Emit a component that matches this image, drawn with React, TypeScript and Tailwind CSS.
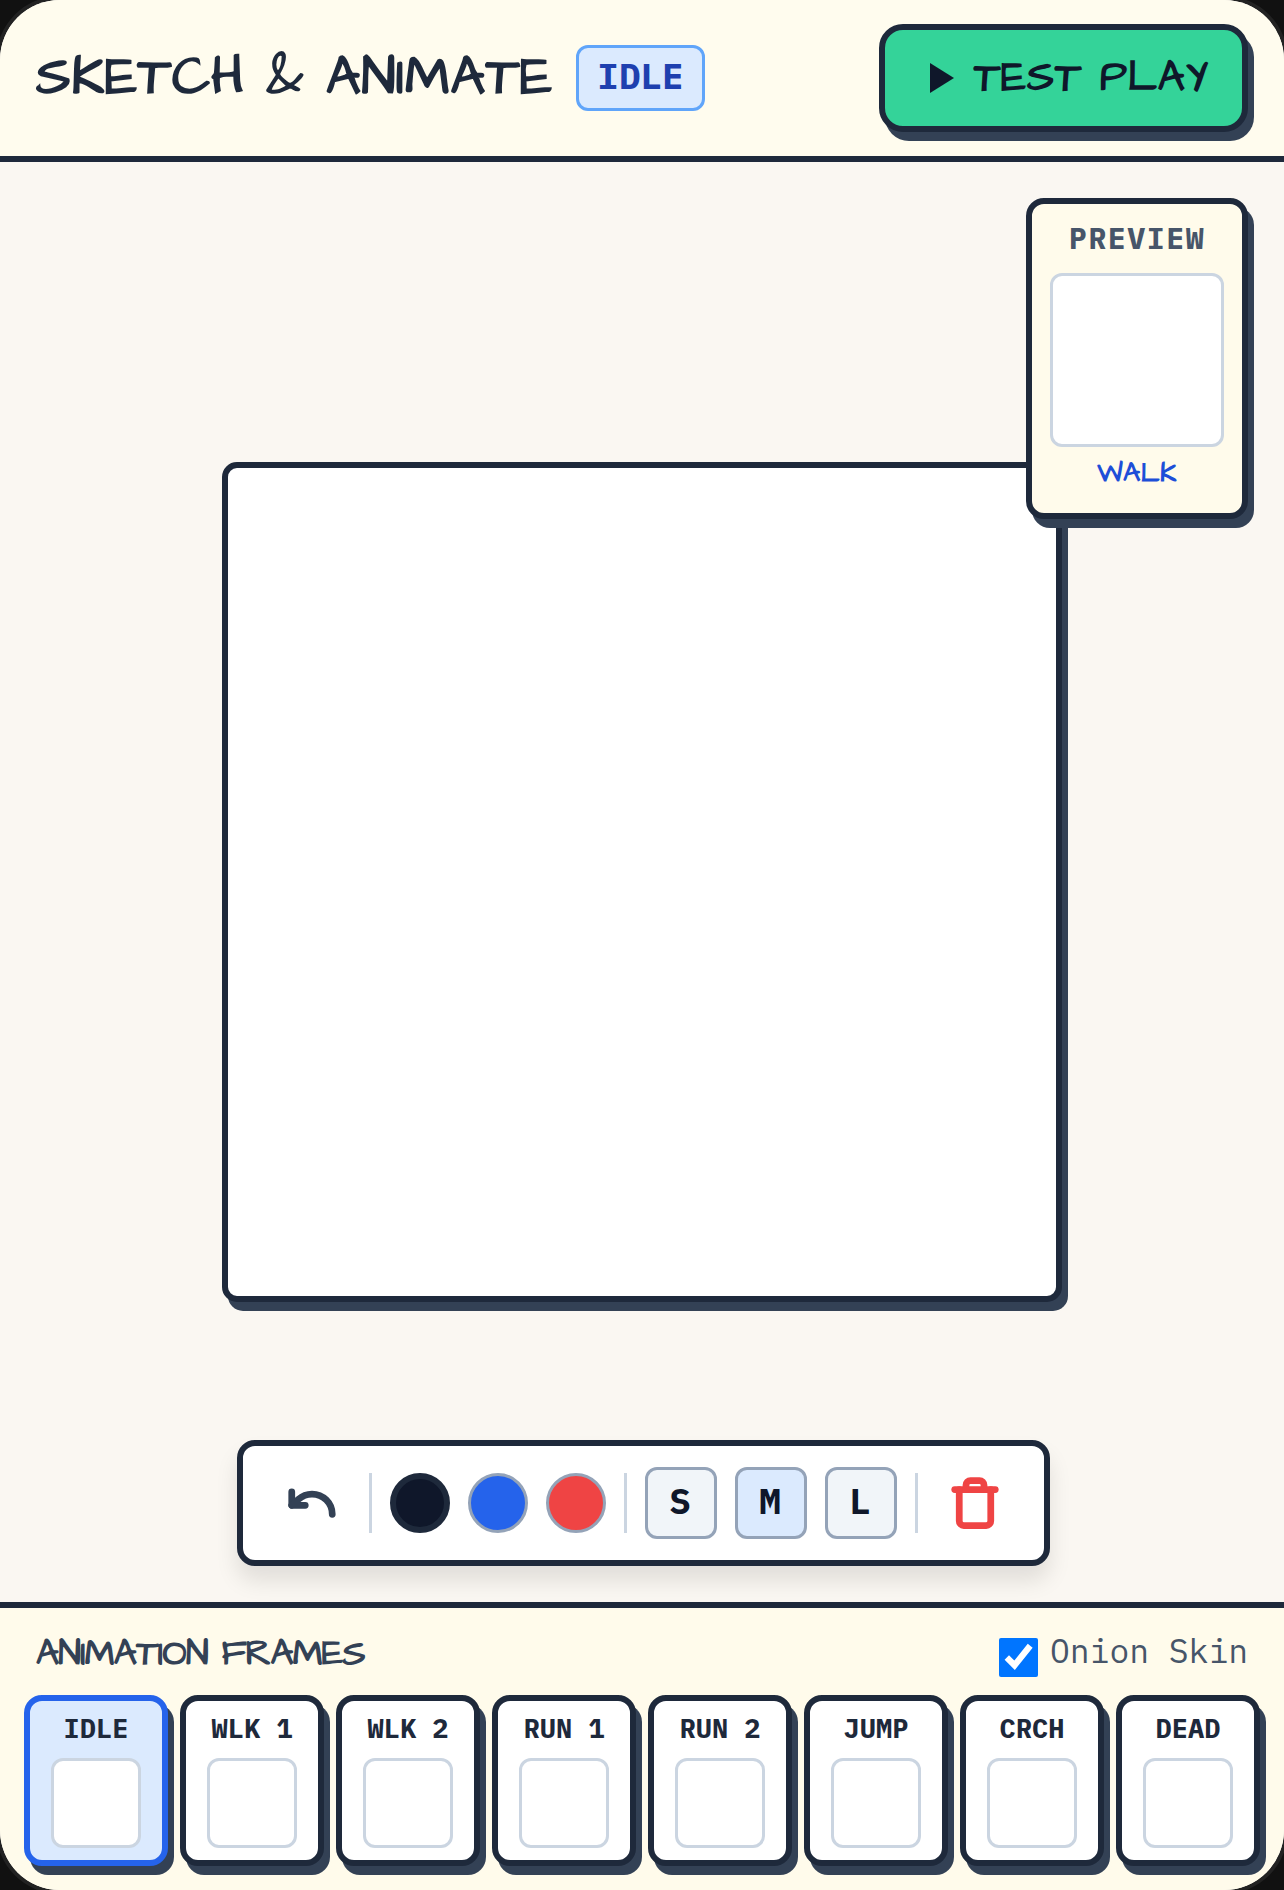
import { Undo, Trash } from "lucide-react";

const FRAMES = ["IDLE", "WLK 1", "WLK 2", "RUN 1", "RUN 2", "JUMP", "CRCH", "DEAD"];
const SKETCH_FONT = "font-['Architects_Daughter','Comic_Neue',cursive]";
const MONO_FONT = "font-['IBM_Plex_Mono','Liberation_Mono',monospace]";

function Divider() {
  return <div className="h-[60px] w-[3px] shrink-0 bg-[#cbd5e1]" />;
}

export default function App() {
  return (
    <div className="h-[1890px] w-[1284px] overflow-hidden bg-[#111111]">
      <div className="relative flex h-full flex-col overflow-hidden rounded-[60px] bg-[#faf7f2] shadow-[0_0_0_4px_#222222]">
        {/* Header */}
        <header className="flex h-[162px] shrink-0 items-center justify-between border-b-[6px] border-[#1e293b] bg-[#fffcee] px-[36px]">
          <div className="flex items-center gap-[24px]">
            <h1 className={`${SKETCH_FONT} w-[516px] text-[54px] leading-none font-bold tracking-[0.75px] whitespace-nowrap text-[#1e293b]`}>
              SKETCH &amp; ANIMATE
            </h1>
            <span className={`${MONO_FONT} flex h-[66px] w-[129px] items-center justify-center rounded-[12px] border-[3px] border-[#60a5fa] bg-[#dbeafe] pb-[5px] text-[36px] font-bold text-[#1e40af]`}>
              IDLE
            </span>
          </div>
          <button
            type="button"
            className="flex h-[108px] w-[369px] items-center justify-center gap-[20px] rounded-[24px] border-[6px] border-[#1e293b] bg-[#34d399] pl-[12px] shadow-[6px_9px_0_#334155]"
          >
            <svg width="24" height="30" viewBox="0 0 24 30" className="shrink-0">
              <path d="M0 0 L24 15 L0 30 Z" fill="#0f172a" />
            </svg>
            <span className={`${SKETCH_FONT} text-[42px] leading-none font-bold tracking-[1px] text-[#0f172a]`}>
              TEST PLAY
            </span>
          </button>
        </header>

        {/* Canvas area */}
        <main className="relative flex min-h-0 flex-1 items-center justify-center">
          <div className="h-[840px] w-[840px] rounded-[15px] border-[6px] border-[#1e293b] bg-white shadow-[6px_9px_0_#334155]" />

          <div className="absolute bottom-[36px] left-[237px] flex h-[126px] w-[813px] items-center justify-center gap-[18px] rounded-[18px] border-[6px] border-[#1e293b] bg-white shadow-[0_15px_22px_rgba(0,0,0,0.1)]">
            <button type="button" className="flex w-[80px] shrink-0 items-center justify-center pl-[2px] text-[#334155]">
              <Undo size={54} strokeWidth={3} />
            </button>
            <Divider />
            <div className="h-[60px] w-[60px] shrink-0 rounded-full border-[6px] border-[#1e293b] bg-[#0f172a]" />
            <div className="h-[60px] w-[60px] shrink-0 rounded-full border-[3px] border-[#94a3b8] bg-[#2563eb]" />
            <div className="h-[60px] w-[60px] shrink-0 rounded-full border-[3px] border-[#94a3b8] bg-[#ef4444]" />
            <Divider />
            {["S", "M", "L"].map((size) => (
              <button
                key={size}
                type="button"
                className={`${MONO_FONT} flex h-[72px] w-[72px] shrink-0 items-center justify-center rounded-[12px] border-[3px] border-[#94a3b8] pr-[2px] pb-[5px] text-[36px] font-bold text-[#0f172a] ${
                  size === "M" ? "bg-[#dbeafe]" : "bg-[#f1f5f9]"
                }`}
              >
                {size}
              </button>
            ))}
            <Divider />
            <button type="button" className="flex w-[80px] shrink-0 items-center justify-center pr-[2px] text-[#ef4444]">
              <Trash size={54} strokeWidth={3} />
            </button>
          </div>

          {/* Preview */}
          <div className="absolute top-[36px] right-[36px] flex h-[321px] w-[222px] flex-col items-center rounded-[18px] border-[6px] border-[#1e293b] bg-[#fffbeb] shadow-[6px_9px_0_#334155]">
            <div className={`${MONO_FONT} mt-[16px] text-[30px] leading-[36px] font-bold tracking-[1.5px] text-[#475569]`}>
              PREVIEW
            </div>
            <div className="mt-[17px] h-[174px] w-[174px] rounded-[12px] border-[3px] border-[#cbd5e1] bg-white" />
            <div className={`${SKETCH_FONT} mt-[8px] text-[27px] leading-[36px] font-bold tracking-[0.5px] text-[#1d4ed8]`}>WALK</div>
          </div>
        </main>

        {/* Frames */}
        <footer className="flex h-[288px] shrink-0 flex-col border-t-[6px] border-[#1e293b] bg-[#fffbeb] px-[24px] pt-[30px]">
          <div className="flex h-[39px] items-start justify-between px-[12px]">
            <h2 className={`${SKETCH_FONT} text-[36px] leading-[32px] font-bold tracking-[-0.75px] text-[#334155]`}>
              ANIMATION FRAMES
            </h2>
            <label className="flex items-start gap-[12px]">
              <input type="checkbox" defaultChecked className="h-[39px] w-[39px] accent-[#0075ff]" />
              <span className={`${MONO_FONT} text-[33px] leading-[26px] text-[#475569]`}>
                Onion Skin
              </span>
            </label>
          </div>
          <div className="mt-[18px] flex gap-[12px]">
            {FRAMES.map((frame, i) => (
              <button
                key={frame}
                type="button"
                className={`flex h-[171px] w-[144px] shrink-0 flex-col items-center rounded-[18px] border-[6px] shadow-[6px_9px_0_#334155] ${
                  i === 0 ? "border-[#2563eb] bg-[#dbeafe]" : "border-[#1e293b] bg-white"
                }`}
              >
                <span className={`${MONO_FONT} mt-[12px] text-[27px] leading-[30px] font-bold whitespace-pre text-[#1e293b]`}>
                  {frame}
                </span>
                <span className="mt-[15px] h-[90px] w-[90px] rounded-[12px] border-[3px] border-[#cbd5e1] bg-white" />
              </button>
            ))}
          </div>
        </footer>
      </div>
    </div>
  );
}
